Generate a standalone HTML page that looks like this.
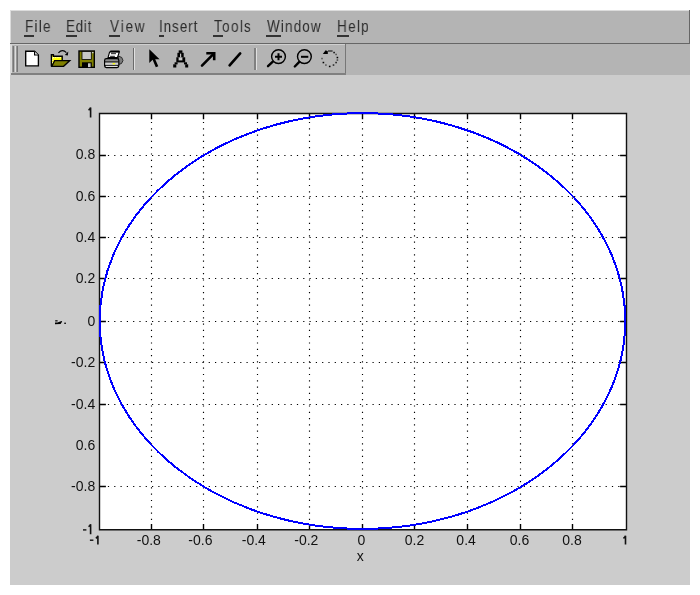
<!DOCTYPE html>
<html><head><meta charset="utf-8">
<style>
html,body{margin:0;padding:0;background:#fff;width:700px;height:595px;overflow:hidden;position:relative;font-family:"Liberation Sans",sans-serif;}
.abs{position:absolute;}
.mi{position:absolute;top:19px;font-size:16px;line-height:16px;color:#2c2c2c;white-space:nowrap;transform:scaleX(0.84);transform-origin:0 0;-webkit-font-smoothing:antialiased;will-change:transform;}
.mi u{text-decoration:none;border-bottom:0;}
.ul{position:absolute;height:2px;background:#333;top:35px;}
.lbl{position:absolute;font-size:12px;line-height:12px;color:#111;white-space:nowrap;}
svg{position:absolute;left:0;top:0;}
.txt{will-change:transform;}
</style></head><body>
<!-- window -->
<div class="abs" style="left:10px;top:10px;width:680px;height:575px;background:#cccccc;"></div>
<!-- menubar -->
<div class="abs" style="left:10px;top:10px;width:680px;height:34px;background:#b4b4b4;"></div>
<div class="abs" style="left:10px;top:10px;width:680px;height:1px;background:#dcdcdc;"></div>
<div class="abs" style="left:10px;top:10px;width:1px;height:64px;background:#dcdcdc;"></div>
<div class="abs" style="left:689px;top:10px;width:1px;height:34px;background:#666;"></div>
<div class="abs" style="left:10px;top:43px;width:680px;height:1px;background:#666;"></div>
<!-- toolbar row -->
<div class="abs" style="left:10px;top:44px;width:680px;height:31px;background:#b4b4b4;"></div>
<div class="abs" style="left:10px;top:44px;width:336px;height:1px;background:#d0d0d0;"></div>
<div class="abs" style="left:345px;top:44px;width:1px;height:31px;background:#777;"></div>
<div class="abs" style="left:10px;top:73px;width:336px;height:2px;background:#808080;"></div>
<div class="abs" style="left:10px;top:44px;width:1px;height:31px;background:#d8d8d8;"></div>
<!-- grip -->
<div class="abs" style="left:11px;top:45px;width:1px;height:28px;background:#dadada;"></div>
<div class="abs" style="left:12px;top:46px;width:1px;height:26px;background:#959595;"></div>
<div class="abs" style="left:13px;top:46px;width:1px;height:26px;background:#767676;"></div>
<div class="abs" style="left:15px;top:46px;width:1px;height:26px;background:#dcdcdc;"></div>
<div class="abs" style="left:16px;top:46px;width:1px;height:26px;background:#959595;"></div>
<div class="abs" style="left:17px;top:46px;width:1px;height:26px;background:#767676;"></div>
<!-- separators -->
<div class="abs" style="left:133px;top:48px;width:1px;height:22px;background:#6a6a6a;"></div>
<div class="abs" style="left:134px;top:48px;width:1px;height:22px;background:#e0e0e0;"></div>
<div class="abs" style="left:254px;top:48px;width:2px;height:22px;background:#808080;"></div>
<div class="abs" style="left:256px;top:48px;width:1px;height:22px;background:#e0e0e0;"></div>

<!-- menu items -->
<span class="mi" style="left:24.5px;letter-spacing:1.53px">File</span>
<span class="mi" style="left:65.5px;letter-spacing:0.90px">Edit</span>
<span class="mi" style="left:109.5px;letter-spacing:2.25px">View</span>
<span class="mi" style="left:159.0px;letter-spacing:1.12px">Insert</span>
<span class="mi" style="left:213.5px;letter-spacing:1.63px">Tools</span>
<span class="mi" style="left:266.5px;letter-spacing:1.40px">Window</span>
<span class="mi" style="left:337.0px;letter-spacing:1.61px">Help</span>
<div class="ul" style="left:24px;width:10px"></div>
<div class="ul" style="left:66px;width:11px"></div>
<div class="ul" style="left:109px;width:11px"></div>
<div class="ul" style="left:159px;width:5px"></div>
<div class="ul" style="left:213px;width:10px"></div>
<div class="ul" style="left:266px;width:15px"></div>
<div class="ul" style="left:337px;width:12px"></div>

<svg width="700" height="595" viewBox="0 0 700 595">
  <!-- toolbar icons -->
  <!-- new -->
  <path d="M25.7 51.2 H34.5 L38.4 55.1 V65.9 H25.7 Z" fill="#fff" stroke="#000" stroke-width="1.35"/>
  <path d="M34.6 51.4 V55 H38.2" fill="#fff" stroke="#000" stroke-width="1.2"/>
  <!-- open -->
  <path d="M51.4 66.2 V54.8 H53.4 V56.3 H62.2 V60.6" fill="#ffff00" stroke="#000" stroke-width="1.4"/>
  <path d="M53 57.6 H61" stroke="#fff" stroke-width="0.9" stroke-dasharray="1.2 1"/>
  <path d="M52.7 57.5 V64" stroke="#fff" stroke-width="0.9" stroke-dasharray="1.2 1"/>
  <path d="M51.8 66.3 L54.6 60.6 H69.8 L63.6 66.3 Z" fill="#808000" stroke="#000" stroke-width="1.3" stroke-linejoin="miter"/>
  <path d="M58.4 52.8 Q62.5 48.6 66.4 52.6" fill="none" stroke="#000" stroke-width="1.1"/>
  <path d="M64.8 54.9 L68.3 51.6 L67.8 55.6 Z" fill="#000"/>
  <!-- save -->
  <rect x="79" y="51" width="15.3" height="16.3" fill="#808000" stroke="#000" stroke-width="1.4"/>
  <rect x="82" y="51.5" width="9.3" height="8" fill="#c8c8c8" stroke="#000" stroke-width="0.8"/>
  <rect x="82" y="62.3" width="9.8" height="5" fill="#000"/>
  <rect x="88" y="63.3" width="2.6" height="3.8" fill="#c8c8c8"/>
  <rect x="92" y="52" width="1.5" height="1.2" fill="#ccc"/>
  <!-- print -->
  <path d="M109.6 52 H119.3 L117.4 57.6 H108 Z" fill="#fff" stroke="#000" stroke-width="1.1"/>
  <rect x="110" y="50.4" width="9.8" height="1.8" rx="0.8" fill="#000"/>
  <path d="M111 53.7 H116 M110.1 56.3 H114.9" stroke="#000" stroke-width="0.9"/>
  <path d="M118.4 56 L121.8 57.5 L123 60.5 L121.5 63.5 L118.6 64.5 Z" fill="#7a7a7a" stroke="#111" stroke-width="0.8"/>
  <rect x="104.6" y="58.7" width="14.2" height="8.9" rx="1.8" fill="#8a8a8a" stroke="#000" stroke-width="1.2"/>
  <rect x="105.3" y="62.4" width="12.8" height="2.6" fill="#cfcfcf"/>
  <path d="M105 61.9 H118.3 M105 65.4 H118.3" stroke="#000" stroke-width="0.9"/>
  <rect x="106" y="65.9" width="11.4" height="1" fill="#e8e8e8"/>
  <ellipse cx="113.8" cy="63.7" rx="1.5" ry="0.8" fill="#ffff00"/>
  <!-- pointer -->
  <path d="M149.3 49.2 V63 L152.6 59.8 L155.8 67.3 L158.3 66.2 L155.2 59.2 H159.6 Z" fill="#000"/>
  <!-- A -->
  <g fill="#000">
  <rect x="178.7" y="50.4" width="3.7" height="2.5"/>
  <rect x="177.4" y="52.8" width="6.3" height="4.6"/>
  <rect x="176.3" y="57.3" width="8.9" height="5.1"/>
  <rect x="174.6" y="62.3" width="3" height="2.1"/>
  <rect x="184" y="62.3" width="3" height="2.1"/>
  <rect x="173.2" y="64.3" width="3.1" height="3.2"/>
  <rect x="185.2" y="64.3" width="3" height="3.2"/>
  </g>
  <rect x="180" y="53.6" width="1.2" height="3.8" fill="#c0c0c0"/>
  <rect x="178.6" y="57.4" width="3.8" height="3" fill="#c8c8c8"/>
  <!-- arrow -->
  <path d="M202 65.6 L213.3 54.2" stroke="#000" stroke-width="2.6" stroke-linecap="round"/>
  <path d="M206.3 53.3 H214.2 V60.3" fill="none" stroke="#000" stroke-width="2.6"/>
  <!-- line -->
  <path d="M229.6 65.4 L240.2 53.4" stroke="#000" stroke-width="2.6" stroke-linecap="round"/>
  <!-- zoom in -->
  <circle cx="278.5" cy="56.6" r="6.9" fill="none" stroke="#000" stroke-width="1.4"/>
  <path d="M275 56.8 H282 M278.5 53.3 V60.3" stroke="#000" stroke-width="2"/>
  <path d="M268 66.2 L272.8 61.7" stroke="#000" stroke-width="2.4" stroke-linecap="round"/>
  <!-- zoom out -->
  <circle cx="304.4" cy="56.6" r="6.9" fill="none" stroke="#000" stroke-width="1.4"/>
  <path d="M301 56.8 H308.3" stroke="#000" stroke-width="2"/>
  <path d="M294.8 66.5 L299.3 61.9" stroke="#000" stroke-width="2.4" stroke-linecap="round"/>
  <!-- rotate -->
  <rect x="333.3" y="51.8" width="1.6" height="1.5" fill="#111"/>
  <rect x="335.3" y="53.7" width="1.6" height="1.5" fill="#555"/>
  <rect x="336.6" y="56.8" width="1.6" height="1.5" fill="#000"/>
  <rect x="336.6" y="59.3" width="1.6" height="1.5" fill="#444"/>
  <rect x="335.3" y="61.8" width="1.6" height="1.5" fill="#222"/>
  <rect x="332.7" y="64.3" width="1.6" height="1.5" fill="#222"/>
  <rect x="328.9" y="65.7" width="1.6" height="1.5" fill="#000"/>
  <rect x="325.1" y="64.3" width="1.6" height="1.5" fill="#555"/>
  <rect x="322.6" y="61.8" width="1.6" height="1.5" fill="#000"/>
  <rect x="321.2" y="57.8" width="1.6" height="1.5" fill="#555"/>
  <path d="M322.8 53.9 L325.6 50.2 L327.8 51.2 V53.9 Z" fill="#000"/>
  <rect x="328" y="50.3" width="4.6" height="1.4" fill="#333"/>

  <!-- y label (rotated bitmap) -->
  <path d="M55.2 320 H57.6 V321.6 H55.2 Z" fill="#333"/>
  <path d="M55 322.6 L57.5 322.4 L61.5 321 L62.2 321.6 L60.6 324 L55 324.2 Z" fill="#000"/>
  <rect x="64.2" y="322.6" width="1.8" height="1.4" fill="#222"/>
  <!-- axes -->
  <rect x="99.5" y="113.5" width="527.0" height="416.29999999999995" fill="#fff"/>
  <g id="grid">
  <path d="M151.5 119.9 V523.4" stroke="#000" stroke-width="1.15" stroke-dasharray="1.2 5.1" stroke-dashoffset="-2"/>
  <path d="M151.5 113.5 V119.30000000000001 M151.5 529.8 V524.0" stroke="#000" stroke-width="1.4"/>
  <path d="M203.5 119.9 V523.4" stroke="#000" stroke-width="1.15" stroke-dasharray="1.2 5.1" stroke-dashoffset="-2"/>
  <path d="M203.5 113.5 V119.30000000000001 M203.5 529.8 V524.0" stroke="#000" stroke-width="1.4"/>
  <path d="M257.5 119.9 V523.4" stroke="#000" stroke-width="1.15" stroke-dasharray="1.2 5.1" stroke-dashoffset="-2"/>
  <path d="M257.5 113.5 V119.30000000000001 M257.5 529.8 V524.0" stroke="#000" stroke-width="1.4"/>
  <path d="M309.5 119.9 V523.4" stroke="#000" stroke-width="1.15" stroke-dasharray="1.2 5.1" stroke-dashoffset="-2"/>
  <path d="M309.5 113.5 V119.30000000000001 M309.5 529.8 V524.0" stroke="#000" stroke-width="1.4"/>
  <path d="M362.5 119.9 V523.4" stroke="#000" stroke-width="1.15" stroke-dasharray="1.2 5.1" stroke-dashoffset="-2"/>
  <path d="M362.5 113.5 V119.30000000000001 M362.5 529.8 V524.0" stroke="#000" stroke-width="1.4"/>
  <path d="M414.5 119.9 V523.4" stroke="#000" stroke-width="1.15" stroke-dasharray="1.2 5.1" stroke-dashoffset="-2"/>
  <path d="M414.5 113.5 V119.30000000000001 M414.5 529.8 V524.0" stroke="#000" stroke-width="1.4"/>
  <path d="M467.5 119.9 V523.4" stroke="#000" stroke-width="1.15" stroke-dasharray="1.2 5.1" stroke-dashoffset="-2"/>
  <path d="M467.5 113.5 V119.30000000000001 M467.5 529.8 V524.0" stroke="#000" stroke-width="1.4"/>
  <path d="M520.5 119.9 V523.4" stroke="#000" stroke-width="1.15" stroke-dasharray="1.2 5.1" stroke-dashoffset="-2"/>
  <path d="M520.5 113.5 V119.30000000000001 M520.5 529.8 V524.0" stroke="#000" stroke-width="1.4"/>
  <path d="M572.5 119.9 V523.4" stroke="#000" stroke-width="1.15" stroke-dasharray="1.2 5.1" stroke-dashoffset="-2"/>
  <path d="M572.5 113.5 V119.30000000000001 M572.5 529.8 V524.0" stroke="#000" stroke-width="1.4"/>
  <path d="M105.9 155.5 H620.1" stroke="#000" stroke-width="1.15" stroke-dasharray="1.2 5.1" stroke-dashoffset="-2"/>
  <path d="M99.5 155.5 H105.9 M626.5 155.5 H620.1" stroke="#000" stroke-width="1.4"/>
  <path d="M105.9 196.5 H620.1" stroke="#000" stroke-width="1.15" stroke-dasharray="1.2 5.1" stroke-dashoffset="-2"/>
  <path d="M99.5 196.5 H105.9 M626.5 196.5 H620.1" stroke="#000" stroke-width="1.4"/>
  <path d="M105.9 237.5 H620.1" stroke="#000" stroke-width="1.15" stroke-dasharray="1.2 5.1" stroke-dashoffset="-2"/>
  <path d="M99.5 237.5 H105.9 M626.5 237.5 H620.1" stroke="#000" stroke-width="1.4"/>
  <path d="M105.9 278.5 H620.1" stroke="#000" stroke-width="1.15" stroke-dasharray="1.2 5.1" stroke-dashoffset="-2"/>
  <path d="M99.5 278.5 H105.9 M626.5 278.5 H620.1" stroke="#000" stroke-width="1.4"/>
  <path d="M105.9 321.5 H620.1" stroke="#000" stroke-width="1.15" stroke-dasharray="1.2 5.1" stroke-dashoffset="-2"/>
  <path d="M99.5 321.5 H105.9 M626.5 321.5 H620.1" stroke="#000" stroke-width="1.4"/>
  <path d="M105.9 362.5 H620.1" stroke="#000" stroke-width="1.15" stroke-dasharray="1.2 5.1" stroke-dashoffset="-2"/>
  <path d="M99.5 362.5 H105.9 M626.5 362.5 H620.1" stroke="#000" stroke-width="1.4"/>
  <path d="M105.9 404.5 H620.1" stroke="#000" stroke-width="1.15" stroke-dasharray="1.2 5.1" stroke-dashoffset="-2"/>
  <path d="M99.5 404.5 H105.9 M626.5 404.5 H620.1" stroke="#000" stroke-width="1.4"/>
  <path d="M105.9 486.5 H620.1" stroke="#000" stroke-width="1.15" stroke-dasharray="1.2 5.1" stroke-dashoffset="-2"/>
  <path d="M99.5 486.5 H105.9 M626.5 486.5 H620.1" stroke="#000" stroke-width="1.4"/>
  <path d="M88.5 110.0 Q90.0 109.2 90.6 107.6 V117.6" fill="none" stroke="#111" stroke-width="1.6"/>
  <path d="M88.5 526.6 Q90.0 525.8 90.6 524.2 V534.2" fill="none" stroke="#111" stroke-width="1.6"/>
  <rect x="83" y="529.2" width="3.4" height="1.4" fill="#111"/>
  <path d="M95.8 538.2 Q97.3 537.4 97.9 535.8 V544.5" fill="none" stroke="#111" stroke-width="1.6"/>
  <rect x="89.9" y="539.5" width="3.5" height="1.4" fill="#111"/>
  <path d="M623.4 538.2 Q624.9 537.4 625.5 535.8 V544.5" fill="none" stroke="#111" stroke-width="1.6"/>
  </g>
  <path d="M99.5 113.5 H626.5 V529.8 H99.5 Z" fill="none" stroke="#111" stroke-width="1.4"/>
  <ellipse cx="362.5" cy="321.0" rx="262.8" ry="207.9" fill="none" stroke="#0000ff" stroke-width="2.0" shape-rendering="crispEdges"/>
</svg>
<svg class="txt" width="700" height="595" viewBox="0 0 700 595">
<g id="labels" font-family="Liberation Sans, sans-serif" font-size="14" fill="#111">
  <text x="95.2" y="159.2" text-anchor="end">0.8</text>
  <text x="95.2" y="200.9" text-anchor="end">0.6</text>
  <text x="95.2" y="241.7" text-anchor="end">0.4</text>
  <text x="95.2" y="283.4" text-anchor="end">0.2</text>
  <text x="95.2" y="326.2" text-anchor="end">0</text>
  <text x="95.2" y="366.7" text-anchor="end">-0.2</text>
  <text x="95.2" y="408.7" text-anchor="end">-0.4</text>
  <text x="95.2" y="450.2" text-anchor="end">0.6</text>
  <text x="95.2" y="491.0" text-anchor="end">-0.8</text>
  <text x="148.8" y="545.3" text-anchor="middle">-0.8</text>
  <text x="200.4" y="545.3" text-anchor="middle">-0.6</text>
  <text x="253.8" y="545.3" text-anchor="middle">-0.4</text>
  <text x="306.3" y="545.3" text-anchor="middle">-0.2</text>
  <text x="361.5" y="545.3" text-anchor="middle">0</text>
  <text x="414.5" y="545.3" text-anchor="middle">0.2</text>
  <text x="466.1" y="545.3" text-anchor="middle">0.4</text>
  <text x="519.5" y="545.3" text-anchor="middle">0.6</text>
  <text x="572" y="545.3" text-anchor="middle">0.8</text>
  <text x="360.2" y="561" text-anchor="middle">x</text>
  </g>
</svg>
</body></html>
